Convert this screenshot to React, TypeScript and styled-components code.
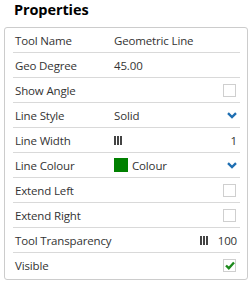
import React from "react";
import styled, { createGlobalStyle } from "styled-components";

const GlobalStyle = createGlobalStyle`
	html, body {
		margin: 0;
		padding: 0;
		background: #ffffff;
	}
	body {
		font-family: "Open Sans", "Liberation Sans", sans-serif;
		color: #333333;
	}
`;

const StyledWrapper = styled.div`
	width: 251px;
	height: 286px;
	padding: 0 3px 0 4px;
	box-sizing: border-box;
`;
const StyledTitle = styled.h2`
	margin: 0;
	padding: 0 0 0 10px;
	height: 27px;
	line-height: 19px;
	font-size: 14.5px;
	letter-spacing: -0.1px;
	font-weight: 700;
	color: #000000;
`;
const StyledPanel = styled.div`
	border: 1px solid #cccccc;
	border-radius: 3px;
	padding: 0 7px 2px 8px;
`;
const StyledRow = styled.div<{ last?: boolean }>`
	display: flex;
	align-items: center;
	height: 24px;
	padding: 0 0 0 2px;
	font-size: 11.5px;
	letter-spacing: -0.15px;
	border-bottom: ${(props) => (props.last ? "none" : "1px solid #d9d9d9")};
`;
const StyledLabel = styled.span`
	width: 99px;
	flex-shrink: 0;
	white-space: nowrap;
`;
const StyledValue = styled.span`
	flex: 1;
	display: flex;
	align-items: center;
	gap: 4px;
	white-space: nowrap;
`;
const StyledRight = styled.span`
	margin-left: auto;
	display: flex;
	align-items: center;
	gap: 10px;
	padding-right: 3px;
`;
const StyledCheckbox = styled.span`
	width: 11px;
	height: 11px;
	border: 1px solid #cfcfcf;
	background: #ffffff;
	display: flex;
	align-items: center;
	justify-content: center;
	margin-right: 1px;
`;
const StyledSwatch = styled.span<{ colour: string }>`
	width: 14px;
	height: 14px;
	background: ${(props) => props.colour};
	display: inline-block;
`;

const Bars: React.FC = () => (
	<svg width="8" height="9" viewBox="0 0 8 9">
		<rect x="0" y="0" width="2" height="9" fill="#444" />
		<rect x="3" y="0" width="2" height="9" fill="#444" />
		<rect x="6" y="0" width="2" height="9" fill="#444" />
	</svg>
);

const Chevron: React.FC = () => (
	<svg width="10" height="7" viewBox="0 0 10 7">
		<path d="M1 1.2 L5 5 L9 1.2" stroke="#1f6fb2" strokeWidth="2.4" fill="none" />
	</svg>
);

const Check: React.FC = () => (
	<svg width="10" height="9" viewBox="0 0 10 9">
		<path d="M1 4.5 L3.8 7.2 L9 1.5" stroke="#1d8a1d" strokeWidth="2.4" fill="none" />
	</svg>
);

const App: React.FC = () => {
	return (
		<StyledWrapper>
			<GlobalStyle />
			<StyledTitle>Properties</StyledTitle>
			<StyledPanel>
				<StyledRow>
					<StyledLabel>Tool Name</StyledLabel>
					<StyledValue>Geometric Line</StyledValue>
				</StyledRow>
				<StyledRow>
					<StyledLabel>Geo Degree</StyledLabel>
					<StyledValue>45.00</StyledValue>
				</StyledRow>
				<StyledRow>
					<StyledLabel>Show Angle</StyledLabel>
					<StyledRight>
						<StyledCheckbox />
					</StyledRight>
				</StyledRow>
				<StyledRow>
					<StyledLabel>Line Style</StyledLabel>
					<StyledValue>Solid</StyledValue>
					<StyledRight>
						<Chevron />
					</StyledRight>
				</StyledRow>
				<StyledRow>
					<StyledLabel>Line Width</StyledLabel>
					<StyledValue>
						<Bars />
					</StyledValue>
					<StyledRight>1</StyledRight>
				</StyledRow>
				<StyledRow>
					<StyledLabel>Line Colour</StyledLabel>
					<StyledValue>
						<StyledSwatch colour="#008000" />
						Colour
					</StyledValue>
					<StyledRight>
						<Chevron />
					</StyledRight>
				</StyledRow>
				<StyledRow>
					<StyledLabel>Extend Left</StyledLabel>
					<StyledRight>
						<StyledCheckbox />
					</StyledRight>
				</StyledRow>
				<StyledRow>
					<StyledLabel>Extend Right</StyledLabel>
					<StyledRight>
						<StyledCheckbox />
					</StyledRight>
				</StyledRow>
				<StyledRow>
					<StyledLabel>Tool Transparency</StyledLabel>
					<StyledRight>
						<Bars />
						100
					</StyledRight>
				</StyledRow>
				<StyledRow last>
					<StyledLabel>Visible</StyledLabel>
					<StyledRight>
						<StyledCheckbox>
							<Check />
						</StyledCheckbox>
					</StyledRight>
				</StyledRow>
			</StyledPanel>
		</StyledWrapper>
	);
};

export default App;
